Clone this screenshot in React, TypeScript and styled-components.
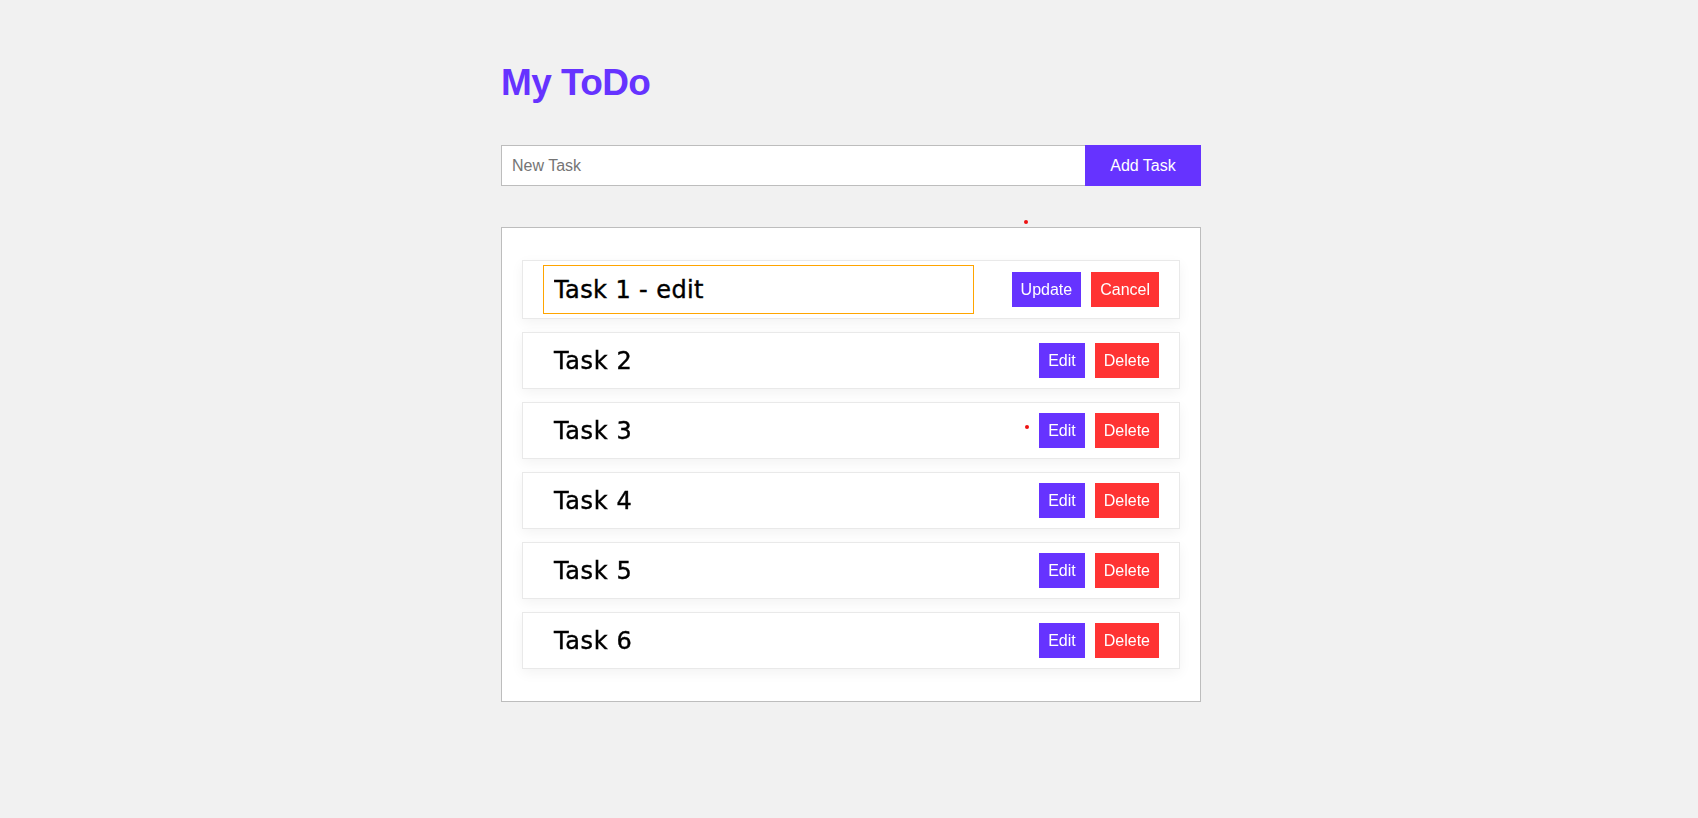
import React, { useEffect, useRef, useState } from "react";
import styled, { createGlobalStyle } from "styled-components";

interface Task {
  id: number;
  title: string;
}

const initialTasks: Array<Task> = [
  { id: 1, title: "Task 1" },
  { id: 2, title: "Task 2" },
  { id: 3, title: "Task 3" },
  { id: 4, title: "Task 4" },
  { id: 5, title: "Task 5" },
  { id: 6, title: "Task 6" }
];

const GlobalStyle = createGlobalStyle`
  html, body {
    margin: 0;
    padding: 0;
    background: #f1f1f1;
    font-family: "Liberation Sans", Arial, sans-serif;
  }
`;

interface EditRowProps {
  value: string;
  onChange: Function;
}

const EditRow = ({ value, onChange }: EditRowProps) => {
  const inputRef = useRef<HTMLInputElement>(null);

  useEffect(() => {
    const el = inputRef.current;
    if (el) {
      el.focus();
      el.setSelectionRange(el.value.length, el.value.length);
    }
  }, []);

  return (
    <Row>
      <EditInput
        ref={inputRef}
        value={value}
        onChange={e => onChange(e.target.value)}
      />
      <Actions>
        <ActionButton variant="primary">Update</ActionButton>
        <ActionButton variant="danger">Cancel</ActionButton>
      </Actions>
    </Row>
  );
};

export default function App() {
  const [tasks] = useState(initialTasks);
  const [newTask, setNewTask] = useState("");
  const [editValue, setEditValue] = useState("Task 1 - edit");
  const editingId = 1;

  const rows = tasks.map(task => {
    if (task.id === editingId) {
      return <EditRow key={task.id} value={editValue} onChange={setEditValue} />;
    }
    return (
      <Row key={task.id}>
        <TaskTitle>{task.title}</TaskTitle>
        <Actions>
          <ActionButton variant="primary">Edit</ActionButton>
          <ActionButton variant="danger">Delete</ActionButton>
        </Actions>
      </Row>
    );
  });

  return (
    <>
      <GlobalStyle />
      <Page>
        <Container>
          <Title>My ToDo</Title>
          <AddForm onSubmit={e => e.preventDefault()}>
            <NewTaskInput
              placeholder="New Task"
              value={newTask}
              onChange={e => setNewTask(e.target.value)}
            />
            <AddButton type="submit">Add Task</AddButton>
          </AddForm>
          <TaskList>{rows}</TaskList>
        </Container>
        {/* stray red markers seen in the screenshot */}
        <Dot style={{ left: 1024, top: 220 }} />
        <Dot style={{ left: 1025, top: 425 }} />
      </Page>
    </>
  );
}

const Page = styled.div`
  position: relative;
  min-height: 818px;
  padding: 62px 0 0 4px;
  box-sizing: border-box;
`;

const Container = styled.div`
  width: 700px;
  margin: 0 auto;
  display: flex;
  flex-direction: column;
`;

const Title = styled.h1`
  margin: 0;
  color: #6633ff;
  font-family: "Liberation Sans", Arial, sans-serif;
  font-size: 37px;
  line-height: 42px;
  font-weight: bold;
  letter-spacing: -0.6px;
`;

const AddForm = styled.form`
  display: flex;
  margin-top: 41px;
`;

const NewTaskInput = styled.input`
  flex: 1;
  height: 41px;
  box-sizing: border-box;
  padding: 10px;
  border: 1px solid #bdbdbd;
  border-right: none;
  background: white;
  font-family: "Liberation Sans", Arial, sans-serif;
  font-size: 16px;
  outline: none;

  &::placeholder {
    color: #757575;
  }
`;

const AddButton = styled.button`
  width: 116px;
  height: 41px;
  border: none;
  background: #6633ff;
  color: white;
  font-family: "Liberation Sans", Arial, sans-serif;
  font-size: 16px;
  cursor: pointer;
`;

const TaskList = styled.div`
  margin-top: 41px;
  padding: 32px 20px;
  background: white;
  border: 1px solid #bdbdbd;
  display: flex;
  flex-direction: column;
  gap: 13px;
`;

const Row = styled.div`
  display: flex;
  align-items: center;
  justify-content: space-between;
  min-height: 47px;
  padding: 4px 20px;
  background: white;
  border: 1px solid #e9e9e9;
  box-shadow: 0 4px 12px rgba(0, 0, 0, 0.05);
`;

const TaskTitle = styled.span`
  padding-left: 11px;
  font-family: "DejaVu Sans", sans-serif;
  font-size: 24px;
  letter-spacing: 0.6px;
  color: #000;
  -webkit-text-stroke: 0.4px #000;
`;

const EditInput = styled.input`
  width: 431px;
  height: 49px;
  box-sizing: border-box;
  padding: 0 10px;
  border: 1px solid #ffa500;
  outline: none;
  font-family: "DejaVu Sans", sans-serif;
  font-size: 24px;
  letter-spacing: 0.4px;
  color: #000;
  caret-color: #000;
  -webkit-text-stroke: 0.4px #000;
`;

const Actions = styled.div`
  display: flex;
  gap: 10px;
`;

const ActionButton = styled.button<{ variant: "primary" | "danger" }>`
  height: 35px;
  padding: 0 9px;
  border: none;
  background: ${p => (p.variant === "primary" ? "#6633ff" : "#ff3333")};
  color: white;
  font-family: "Liberation Sans", Arial, sans-serif;
  font-size: 16px;
  cursor: pointer;
`;

const Dot = styled.span`
  position: absolute;
  width: 4px;
  height: 4px;
  border-radius: 50%;
  background: #ee1111;
`;
